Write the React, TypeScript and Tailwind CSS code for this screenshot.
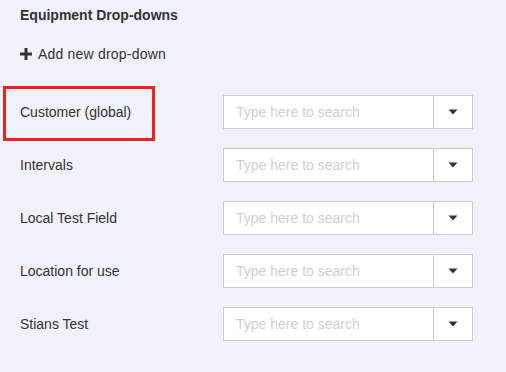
const fields = ["Customer (global)", "Intervals", "Local Test Field", "Location for use", "Stians Test"]

function DropDownRow({ label, highlighted }: { label: string; highlighted?: boolean }) {
  return (
    <div className="relative flex items-center h-[34px]">
      {highlighted && (
        <div className="absolute left-[-17px] top-[-9px] w-[152px] h-[55px] border-[3px] border-[#f02020]" />
      )}
      <div className="w-[203px] text-[14px] text-[#333]">{label}</div>
      <div className="flex w-[250px] h-[34px] bg-white border border-[#cccccc]">
        <input
          className="flex-1 min-w-0 px-3 text-[14px] text-[#333] placeholder:text-[#cfcfd4] outline-none bg-transparent"
          placeholder="Type here to search"
        />
        <button className="w-[39px] flex items-center justify-center border-l border-[#cccccc]">
          <svg width="10" height="6" viewBox="0 0 10 6">
            <path d="M0.5 0.5h9L5 5.5z" fill="#333" />
          </svg>
        </button>
      </div>
    </div>
  )
}

export default function App() {
  return (
    <div className="w-[506px] h-[372px] bg-[#f1f1f9] pl-[20px] pt-[7px] font-['Liberation_Sans',Arial,sans-serif]">
      <h2 className="h-[16px] leading-[16px] text-[14px] font-bold text-[#333]">Equipment Drop-downs</h2>
      <button className="mt-[21px] h-[20px] flex items-center gap-[6px] text-[14px] tracking-[0.2px] text-[#333]">
        <svg width="12" height="12" viewBox="0 0 12 12">
          <rect x="0" y="4.5" width="12" height="3" fill="#333" />
          <rect x="4.5" y="0" width="3" height="12" fill="#333" />
        </svg>
        Add new drop-down
      </button>
      <div className="mt-[31px] flex flex-col gap-[19px]">
        {fields.map((f, i) => (
          <DropDownRow key={f} label={f} highlighted={i === 0} />
        ))}
      </div>
    </div>
  )
}
